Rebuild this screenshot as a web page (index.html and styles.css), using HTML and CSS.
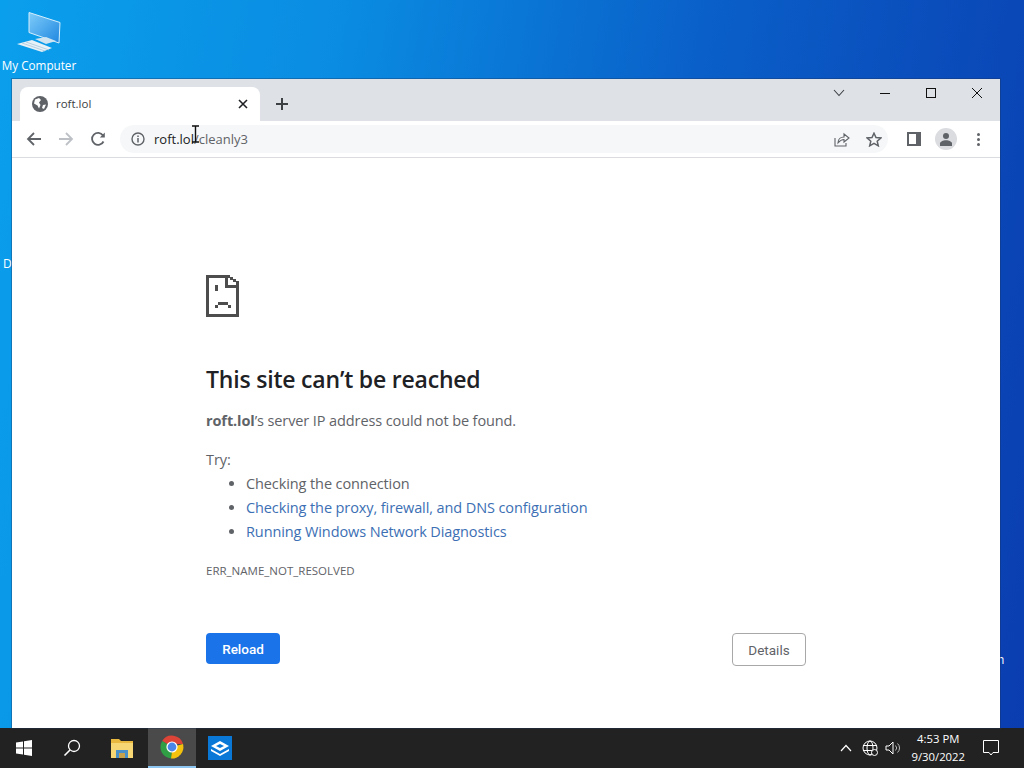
FILE: index.html
```html
<!DOCTYPE html>
<html lang="en">
<head>
<meta charset="utf-8">
<title>roft.lol</title>
<link rel="stylesheet" href="styles.css">
</head>
<body>
<div class="screen">
  <div class="desktop">
    <div class="desk-icon">
      <svg class="pc-icon" width="48" height="42" viewBox="0 0 48 42">
        <defs><linearGradient id="scr" x1="0" y1="0" x2="1" y2="1"><stop offset="0" stop-color="#7fcdfa"/><stop offset="1" stop-color="#1f86e0"/></linearGradient></defs>
        <path d="M13 .5 L44 10.5 L43 31 L13 20.5 Z" fill="url(#scr)" stroke="#d5eefc" stroke-width="1"/>
        <path d="M19 27 L30 25 L40 29 L30 32 Z" fill="#cfe3f0"/>
        <path d="M1 32 L16 28 L36 36 L26 40 Z" fill="#e6f1f8"/>
        <path d="M6 31 L29 39 M10 30 L33 38" stroke="#a9c6da" stroke-width=".8"/>
      </svg>
      <span class="desk-label">My Computer</span>
    </div>
    <span class="stray stray-d">D</span>
    <span class="stray stray-n">n</span>

    <div class="window">
      <div class="tabstrip">
        <div class="tab">
          <svg class="globe" width="16" height="16" viewBox="0 0 16 16"><circle cx="8" cy="8" r="8" fill="#5f6368"/><path d="M3 3.5 L7 2 L9 4 L7 6.5 L8.5 9 L7 12.5 L5.5 9.5 L2 7.5 Z M11 9 L14 8.5 L12 13 L10 12 Z" fill="#fff"/></svg>
          <span class="tab-title">roft.lol</span>
          <svg class="tab-close" width="10" height="10" viewBox="0 0 10 10"><path d="M1 1 L9 9 M9 1 L1 9" stroke="#202124" stroke-width="1.6"/></svg>
        </div>
        <svg class="new-tab" width="12" height="12" viewBox="0 0 12 12"><path d="M6 0 V12 M0 6 H12" stroke="#3c4043" stroke-width="2"/></svg>
        <div class="caption">
          <svg class="cap-btn" width="12" height="8" viewBox="0 0 12 8"><path d="M1 1 L6 6.5 L11 1" fill="none" stroke="#3c4043" stroke-width="1.1"/></svg>
          <svg class="cap-btn" width="10" height="10" viewBox="0 0 10 10"><path d="M0 5.5 H10" stroke="#111" stroke-width="1"/></svg>
          <svg class="cap-btn" width="10" height="10" viewBox="0 0 10 10"><rect x=".5" y=".5" width="9" height="9" fill="none" stroke="#111" stroke-width="1"/></svg>
          <svg class="cap-btn" width="12" height="12" viewBox="0 0 12 12"><path d="M1 1 L11 11 M11 1 L1 11" stroke="#111" stroke-width="1"/></svg>
        </div>
      </div>
      <div class="toolbar">
        <svg class="nav" width="16" height="14" viewBox="0 0 16 14"><path d="M15 7 H2 M8 1 L2 7 L8 13" fill="none" stroke="#5f6368" stroke-width="1.8"/></svg>
        <svg class="nav" width="16" height="14" viewBox="0 0 16 14"><path d="M1 7 H14 M8 1 L14 7 L8 13" fill="none" stroke="#bdc1c6" stroke-width="1.8"/></svg>
        <svg class="nav" width="16" height="16" viewBox="0 0 16 16"><path d="M13.5 10.5 A6 6 0 1 1 13 4.5" fill="none" stroke="#5f6368" stroke-width="1.8"/><path d="M14.8 1.5 V6.5 H9.8 Z" fill="#5f6368"/></svg>
        <div class="omnibox">
          <svg class="info" width="14" height="14" viewBox="0 0 14 14"><circle cx="7" cy="7" r="6" fill="none" stroke="#5f6368" stroke-width="1.4"/><path d="M7 6 V10.5 M7 3.4 V5" stroke="#5f6368" stroke-width="1.5"/></svg>
          <span class="url">roft.lol<span class="url-path">/cleanly3</span></span>
          <svg class="share" width="16" height="15" viewBox="0 0 16 15"><path d="M1 6 V14 H12 V11" fill="none" stroke="#5f6368" stroke-width="1.1"/><path d="M4 11 C4 7 7 5 10 5 V2 L15 6 L10 10 V7.5 C8 7.5 6 8.5 4 11 Z" fill="none" stroke="#5f6368" stroke-width="1.1"/></svg>
          <svg class="star" width="16" height="15" viewBox="0 0 16 15"><path d="M8 1.2 L10 5.6 L14.8 6 L11.2 9.2 L12.3 13.8 L8 11.3 L3.7 13.8 L4.8 9.2 L1.2 6 L6 5.6 Z" fill="none" stroke="#5f6368" stroke-width="1.5"/></svg>
        </div>
        <svg class="side" width="14" height="14" viewBox="0 0 14 14"><path d="M0 0 H14 V14 H0 Z M2 2 V12 H9 V2 Z" fill="#5f6368" fill-rule="evenodd"/></svg>
        <div class="avatar"><svg width="14" height="14" viewBox="0 0 14 14"><circle cx="7" cy="4" r="3" fill="#5f6368"/><path d="M1 14 V11.5 C1 9.5 4 8.2 7 8.2 C10 8.2 13 9.5 13 11.5 V14 Z" fill="#5f6368"/></svg></div>
        <div class="dots"><i></i><i></i><i></i></div>
      </div>
      <main class="page">
        <div class="content">
          <svg class="sad" width="33" height="42" viewBox="0 0 33 42" shape-rendering="crispEdges">
            <path d="M0 0 H24 V2 H27 V4 H30 V6 H33 V42 H0 Z M3 3 V39 H30 V13 H19 V3 Z M22 3 V10 H30 V7 H27 V5 H24 V3 Z" fill="#4d4d4d" fill-rule="evenodd"/>
            <path d="M9 10 H12 V16 H9 Z M9 30 H12 V33 H9 Z M12 27 H22 V30 H12 Z M22 30 H25 V33 H22 Z" fill="#4d4d4d"/>
          </svg>
          <h1 class="title">This site can’t be reached</h1>
          <p class="summary"><strong>roft.lol</strong>’s server IP address could not be found.</p>
          <p class="try">Try:</p>
          <ul class="tips">
            <li>Checking the connection</li>
            <li><a class="link">Checking the proxy, firewall, and DNS configuration</a></li>
            <li><a class="link">Running Windows Network Diagnostics</a></li>
          </ul>
          <p class="code">ERR_NAME_NOT_RESOLVED</p>
          <div class="actions">
            <button class="btn-reload">Reload</button>
            <button class="btn-details">Details</button>
          </div>
        </div>
      </main>
    </div>
    <svg class="ibeam" width="9" height="18" viewBox="0 0 9 18"><path d="M1 1 H8 M1 17 H8 M4.5 1 V17" fill="none" stroke="#111" stroke-width="1.4"/></svg>
  </div>
  <footer class="taskbar">
    <div class="tb-item"><svg width="16" height="16" viewBox="0 0 16 16"><path d="M0 2.4 L7 1.4 V7.5 H0 Z M8 1.2 L16 0 V7.5 H8 Z M0 8.5 H7 V14.6 L0 13.6 Z M8 8.5 H16 V16 L8 14.8 Z" fill="#fff"/></svg></div>
    <div class="tb-item"><svg width="18" height="18" viewBox="0 0 18 18"><circle cx="11" cy="7" r="5.5" fill="none" stroke="#fff" stroke-width="1.3"/><path d="M7 11 L1.5 16.5" stroke="#fff" stroke-width="1.6"/></svg></div>
    <div class="tb-item tb-folder"><svg width="22" height="20" viewBox="0 0 22 20"><path d="M0 1 H8 L10 3 H22 V20 H0 Z" fill="#e9b93f"/><path d="M0 5 H22 V20 H0 Z" fill="#f7d774"/><path d="M5 20 V12 H17 V20 H14 V15 H8 V20 Z" fill="#4a90c8"/><path d="M8 15 H14 V20 H8 Z" fill="#c8a24a"/></svg></div>
    <div class="tb-item tb-active"><svg width="24" height="24" viewBox="0 0 24 24"><path d="M12 12 L2.2 6 A11.5 11.5 0 0 1 23 9 H12 Z" fill="#db4437"/><path d="M12 12 L23 9 A11.5 11.5 0 0 1 11 23.5 Z" fill="#f4c20d"/><path d="M12 12 L11 23.5 A11.5 11.5 0 0 1 2.2 6 Z" fill="#2f9e44"/><circle cx="12" cy="12" r="5.6" fill="#fff"/><circle cx="12" cy="12" r="4.4" fill="#4a86e8"/></svg></div>
    <div class="tb-item"><svg width="24" height="24" viewBox="0 0 24 24"><rect width="24" height="24" fill="#0a78d7"/><path d="M12 5 L21 10 L12 15 L3 10 Z" fill="#fff"/><path d="M3 13 L12 18 L21 13 V15 L12 20 L3 15 Z" fill="#fff"/><path d="M12 8 L16 10 L12 12 L8 10 Z" fill="#0a78d7"/></svg></div>
    <div class="tray">
      <svg class="tray-icon tray-chevron" width="12" height="8" viewBox="0 0 12 8"><path d="M1 7 L6 1.5 L11 7" fill="none" stroke="#fff" stroke-width="1.2"/></svg>
      <svg class="tray-icon" width="16" height="16" viewBox="0 0 16 16"><circle cx="8" cy="8" r="7" fill="none" stroke="#fff"/><ellipse cx="8" cy="8" rx="3" ry="7" fill="none" stroke="#fff"/><path d="M1 5.5 H15 M1 10.5 H15" stroke="#fff"/><circle cx="12.5" cy="12.5" r="3" fill="#222" stroke="#fff"/></svg>
      <svg class="tray-icon" width="16" height="14" viewBox="0 0 16 14"><path d="M1 5 H4 L8 1 V13 L4 9 H1 Z" fill="none" stroke="#fff"/><path d="M10.5 4.5 A3.5 3.5 0 0 1 10.5 9.5 M12.5 2.5 A6 6 0 0 1 12.5 11.5" fill="none" stroke="#bbb"/></svg>
      <div class="clock"><span>4:53 PM</span><span>9/30/2022</span></div>
      <svg class="notif" width="16" height="16" viewBox="0 0 16 16"><path d="M.5 .5 H15.5 V12.5 H10 L8 15 L6 12.5 H.5 Z" fill="none" stroke="#fff"/></svg>
    </div>
  </footer>
</div>
</body>
</html>
```
FILE: styles.css
```css
* { box-sizing: border-box; }
html, body { margin: 0; padding: 0; }
body { font-family: "Open Sans", "Liberation Sans", sans-serif; }
.screen { width: 1024px; height: 768px; display: flex; flex-direction: column; overflow: hidden; }
.desktop { position: relative; flex: 1; background: linear-gradient(100deg, #0a9fec 0%, #0a8ce2 30%, #0a5fc8 62%, #0a3db0 100%); }
.desk-icon { position: absolute; left: 0; top: 11px; width: 78px; display: flex; flex-direction: column; align-items: center; }
.pc-icon { margin-left: 1px; margin-top: 1px; margin-bottom: 3px; }
.desk-label { font-size: 11.7px; line-height: 16px; color: #fff; white-space: nowrap; }
.stray { position: absolute; font-size: 12px; line-height: 16px; color: #fff; }
.stray-d { left: 3px; top: 256px; }
.stray-n { left: 997px; top: 652px; }
.window { position: absolute; left: 12px; top: 79px; width: 988px; height: 649px; background: #fff; display: flex; flex-direction: column; box-shadow: 0 0 0 1px rgba(30,50,90,.35); }
.tabstrip { height: 42px; background: #dee1e6; display: flex; align-items: flex-end; padding-left: 8px; position: relative; }
.tab { width: 240px; height: 34px; background: #fff; border-radius: 8px 8px 0 0; display: flex; align-items: center; padding: 0 12px; }
.globe { margin-right: 8px; }
.tab-title { flex: 1; font-size: 11.5px; line-height: 14px; margin-bottom: 1px; color: #3c4043; }
.new-tab { margin: 0 0 11px 16px; }
.caption { position: absolute; right: 0; top: 0; display: flex; align-items: center; height: 28px; }
.cap-btn { display: block; }
.cap-btn:nth-child(1) { margin-right: 35px; }
.cap-btn:nth-child(2) { margin-right: 36px; }
.cap-btn:nth-child(3) { margin-right: 35px; }
.cap-btn:nth-child(4) { margin-right: 17px; }
.toolbar { height: 37px; display: flex; align-items: center; padding-left: 14px; border-bottom: 1px solid #dadce0; flex: none; }
.nav { margin-right: 16px; flex: none; }
.omnibox { width: 768px; height: 28px; border-radius: 14px; background: #f6f7f8; display: flex; align-items: center; padding: 0 6px 0 11px; margin-left: -2px; flex: none; }
.info { margin-right: 9px; }
.url { flex: 1; font-size: 13px; color: #202124; }
.url-path { color: #5f6368; }
.share { margin-right: 16px; }
.side { margin-left: 19px; flex: none; }
.avatar { width: 22px; height: 22px; border-radius: 50%; background: #dadce0; margin-left: 14px; display: flex; align-items: center; justify-content: center; overflow: hidden; flex: none; }
.dots { display: flex; flex-direction: column; gap: 2px; margin-left: 20px; }
.dots i { display: block; width: 3px; height: 3px; border-radius: 50%; background: #5f6368; }
.page { flex: 1; padding: 117px 0 0 194px; }
.content { width: 600px; color: #5f6368; font-size: 14.5px; letter-spacing: -0.1px; }
.sad { display: block; }
.title { margin: 46px 0 0; font-size: 23px; letter-spacing: -0.2px; line-height: 33px; font-weight: 600; color: #202124; }
.summary { margin: 15px 0 0; line-height: 20px; }
.summary strong { font-weight: 700; }
.try { margin: 19px 0 0; line-height: 20px; }
.tips { margin: 4px 0 0; padding-left: 40px; }
.tips li { line-height: 20px; margin-bottom: 4px; }
.link { color: #3c6fb4; }
.code { margin: 21px 0 0; font-size: 11.5px; letter-spacing: 0; line-height: 16px; }
.actions { display: flex; justify-content: space-between; align-items: flex-start; margin-top: 54px; }
.btn-reload { width: 74px; height: 31px; background: #1a73e8; border: 0; border-radius: 4px; color: #fff; font: 500 13.5px "Roboto", sans-serif; padding: 0; }
.btn-details { width: 74px; height: 33px; background: #fff; border: 1px solid #a8a8a8; border-radius: 4px; color: #5f6368; font: 400 13.5px "Roboto", sans-serif; padding: 0; }
.ibeam { position: absolute; left: 191px; top: 125px; }
.taskbar { height: 40px; flex: none; background: #222; display: flex; align-items: stretch; }
.tb-item { width: 48px; display: flex; align-items: center; justify-content: center; }
.tb-folder { width: 52px; }
.tb-active { background: #4a4a4a; border-bottom: 2px solid #8ec6f2; }
.tray { margin-left: auto; display: flex; align-items: center; color: #fff; }
.tray-icon { margin-right: 7px; }
.tray-chevron { margin-right: 10px; }
.clock { display: flex; flex-direction: column; align-items: center; font-size: 11.3px; line-height: 18px; margin: 0 18px 0 3px; }
.notif { margin-right: 25px; }
```
